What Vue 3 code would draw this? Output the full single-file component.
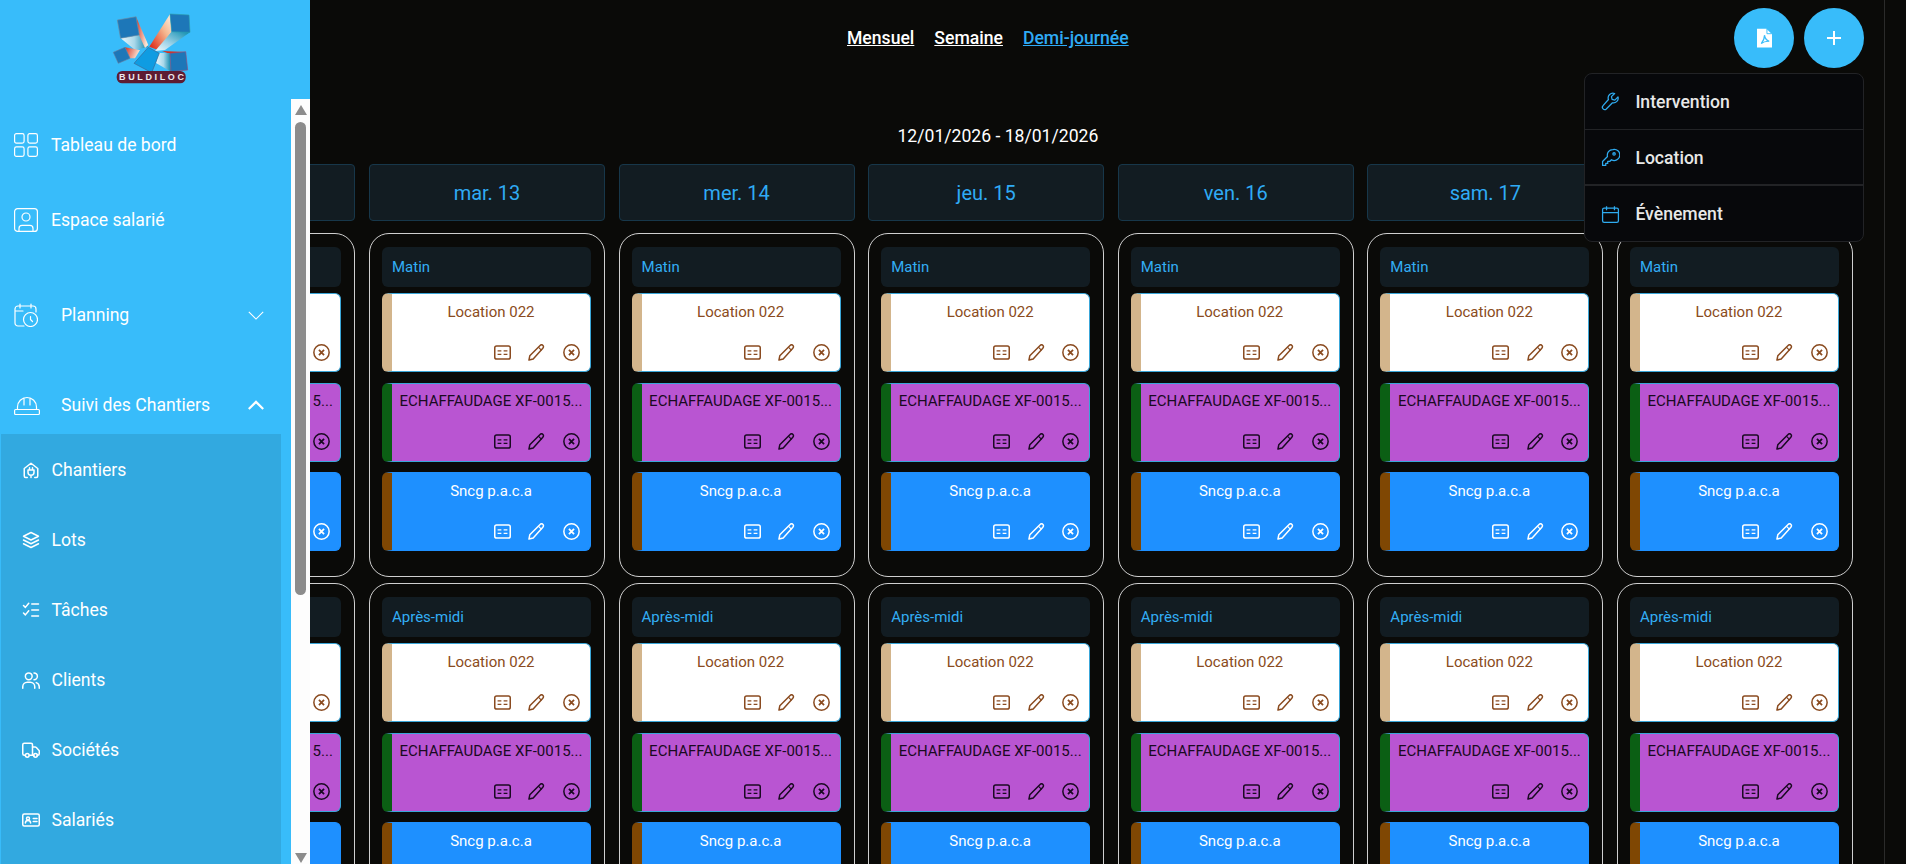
<template>
  <div class="page">
    <aside class="sidebar">
      <div class="logo">
        <svg width="80" height="72" viewBox="112 13 80 72">
          <defs>
            <linearGradient id="redWhite" x1="0" y1="0" x2="1" y2="0.300">
              <stop offset="0" stop-color="#d8301f" />
              <stop offset="1" stop-color="#f8e4d4" />
            </linearGradient>
            <linearGradient id="fireUp" x1="0" y1="1" x2="1" y2="0">
              <stop offset="0.100" stop-color="#e0331f" />
              <stop offset="0.600" stop-color="#f5b78f" />
              <stop offset="1" stop-color="#fdf3e8" />
            </linearGradient>
            <linearGradient id="iceTeal" x1="0" y1="0" x2="1" y2="0">
              <stop offset="0" stop-color="#eaf6fb" />
              <stop offset="0.500" stop-color="#a9d8ea" />
              <stop offset="1" stop-color="#0a86ab" />
            </linearGradient>
            <linearGradient id="tealIce" x1="1" y1="0" x2="0" y2="1">
              <stop offset="0" stop-color="#0b8cae" />
              <stop offset="0.600" stop-color="#9ed3e8" />
              <stop offset="1" stop-color="#f2fafd" />
            </linearGradient>
          </defs>
          <polygon points="120.7,38.3 139,35 148,47 135,50" fill="url(#iceTeal)" />
          <polygon points="136,16.7 148.3,45 145,48 139,35" fill="url(#redWhite)" />
          <rect x="118.8" y="18.3" width="19" height="18.5" fill="#1d77b8" stroke="#6f8aa0" stroke-width="0.6" transform="rotate(-10 128 27.5)" />
          <polygon points="170,14 171.7,31.7 158,50 149.3,46.7" fill="url(#fireUp)" />
          <polygon points="171.7,31.7 190,32.3 165,50 155,51" fill="url(#tealIce)" />
          <polygon points="170,14 189,15 190,32.3 171.7,31.7" fill="#1d77b8" stroke="#2b9aa8" stroke-width="0.6" />
          <polygon points="125,47.3 140,50 135,58.3 130,58.3" fill="url(#redWhite)" />
          <polygon points="113.3,52.3 125,47.3 130,58.3 118.3,63.3" fill="#1d77b8" stroke="#6a7a9a" stroke-width="0.6" />
          <polygon points="162,51 186,52 170,54" fill="#d8301f" />
          <polygon points="159,53 170,53 171,71.7 156,63" fill="url(#iceTeal)" />
          <polygon points="170,53.3 185.7,51.7 187.7,70 171,71.7" fill="#1d77b8" stroke="#9a4a78" stroke-width="0.6" />
          <polygon points="134,63.3 148.3,47.3 159.3,53.3 151.7,72.7" fill="#0f9ce2" stroke="#3f5f8a" stroke-width="0.6" />
          <rect x="116.7" y="71" width="69" height="12.3" rx="5.5" fill="#5e1c33" />
          <text x="119" y="80.3" class="logo-text" textLength="65" lengthAdjust="spacing">BULDILOC</text>
        </svg>
      </div>

      <div class="side-body">
        <nav class="menu">
          <div v-for="m in topMenu" :key="m.label" class="menu-item">
            <svg class="ic-lg" viewBox="0 0 24 24" v-html="m.icon"></svg>
            <span>{{ m.label }}</span>
          </div>

          <div class="menu-group planning">
            <svg class="ic-lg" viewBox="0 0 24 24" v-html="icons.planning"></svg>
            <span class="group-label">Planning</span>
            <svg class="chev" viewBox="0 0 20 12"><path d="M2 2l8 8 8-8" fill="none" stroke="#fff" stroke-width="1.2" /></svg>
          </div>

          <div class="menu-group chantiers">
            <svg class="ic-helmet" viewBox="0 0 26 24" v-html="icons.helmet"></svg>
            <span class="group-label group-label--tight">Suivi des Chantiers</span>
            <svg class="chev" viewBox="0 0 20 12"><path d="M2 10l8-8 8 8" fill="none" stroke="#fff" stroke-width="2.4" /></svg>
          </div>

          <div class="submenu">
            <div v-for="s in subMenu" :key="s.label" class="sub-item">
              <svg class="ic-sm" viewBox="0 0 24 24" v-html="s.icon"></svg>
              <span>{{ s.label }}</span>
            </div>
          </div>
        </nav>
        <div class="scrollbar">
          <span class="arrow-up"></span>
          <span class="thumb"></span>
          <span class="arrow-down"></span>
        </div>
      </div>
    </aside>

    <main class="main">
      <div class="topbar">
        <div class="views">
          <a class="view">Mensuel</a>
          <a class="view">Semaine</a>
          <a class="view view--active">Demi-journée</a>
        </div>
        <div class="actions">
          <button class="round">
            <svg width="15" height="20" viewBox="0 0 16 20">
              <path d="M0 0h10l6 6v14H0z" fill="#fff" />
              <path d="M10.6 0.4v5h5" fill="none" stroke="#38bcfa" stroke-width="1" />
              <path d="M8 7c.4 3 2 5.5 5 6.5-3-.2-6 .4-8.5 2.500 2-2.500 3.500-5.500 3.500-9z" fill="none" stroke="#38bcfa" stroke-width="1.3" />
            </svg>
          </button>
          <button class="round">
            <svg width="16" height="16" viewBox="0 0 16 16"><path d="M1 8h14M8 1v14" stroke="#fff" stroke-width="2" /></svg>
          </button>
          <div class="dropdown">
            <div v-for="d in dropItems" :key="d.label" class="drop-item">
              <svg class="drop-ic" viewBox="0 0 24 24" v-html="d.icon"></svg>
              <span>{{ d.label }}</span>
            </div>
          </div>
        </div>
      </div>

      <div class="range">12/01/2026 - 18/01/2026</div>

      <div class="week">
        <div v-for="day in days" :key="day" class="day">
          <div class="day-head">{{ day }}</div>
          <div v-for="slot in slots" :key="slot" class="slot">
            <div class="slot-title">{{ slot }}</div>
            <div v-for="ev in events" :key="ev.title" :class="['event', ev.cls]">
              <div class="event-title">{{ ev.title }}</div>
              <div class="event-icons">
                <svg class="ev-ic" viewBox="0 0 18 18"><rect x="0.8" y="2" width="16.4" height="14" rx="2" fill="none" stroke="currentColor" stroke-width="1.6" /><path d="M3.8 7.3h4M10.2 7.3h4M3.8 11h4M10.2 11h4" stroke="currentColor" stroke-width="1.5" /></svg>
                <svg class="ev-ic" viewBox="0 0 18 18"><path d="M1 17l.9-4.500L12.800 1.600c.9-.9 2.200-.9 3-.1s.8 2.100-.1 3L5.500 16z" fill="none" stroke="currentColor" stroke-width="1.6" stroke-linejoin="round" /><path d="M11 3.400l3.400 3.400" stroke="currentColor" stroke-width="1.2" /></svg>
                <svg class="ev-ic" viewBox="0 0 18 18"><circle cx="9" cy="9" r="8.1" fill="none" stroke="currentColor" stroke-width="1.6" /><path d="M6.300 6.300l5.400 5.400M11.700 6.300l-5.400 5.400" stroke="currentColor" stroke-width="1.9" /></svg>
              </div>
            </div>
          </div>
        </div>
      </div>
    </main>
    <div class="rail"></div>
  </div>
</template>

<script setup>
const line = 'fill="none" stroke="currentColor" stroke-width="1.2" stroke-linecap="round" stroke-linejoin="round"'
const lineSm = 'fill="none" stroke="currentColor" stroke-width="2" stroke-linecap="round" stroke-linejoin="round"'

const icons = {
  grid: `<g ${line}><rect x="0.6" y="0.6" width="9.5" height="9.5" rx="1.8"/><rect x="13.9" y="0.6" width="9.5" height="9.5" rx="1.8"/><rect x="0.6" y="13.9" width="9.5" height="9.5" rx="1.8"/><rect x="13.9" y="13.9" width="9.5" height="9.5" rx="1.8"/></g>`,
  user: `<g ${line}><rect x="0.6" y="0.6" width="22.8" height="22.8" rx="3"/><circle cx="12" cy="9" r="4"/><path d="M5 23.4v-3a3 3 0 0 1 3-3h8a3 3 0 0 1 3 3v3"/></g>`,
  planning: `<g ${line}><path d="M10 23H4a3 3 0 0 1-3-3V6a3 3 0 0 1 3-3h15a3 3 0 0 1 3 3v3M6 1v4M17 1v4M1 8h8"/><circle cx="16.5" cy="16.5" r="7"/><path d="M16.5 13.5v3l2 2"/></g>`,
  helmet: `<g ${line}><rect x="0.6" y="16.5" width="24.8" height="5" rx="1"/><path d="M3.5 16.500V14a9.500 9.500 0 0 1 19 0v2.500M10 5v7M16 5v7"/></g>`,
  house: `<g ${lineSm}><path d="M7 22H5a2 2 0 0 1-2-2V10l9-7 9 7v10a2 2 0 0 1-2 2h-2"/><path d="M8 12h8v3a4 4 0 0 1-8 0zM10 9v3M14 9v3M12 19v3"/></g>`,
  layers: `<g ${lineSm}><path d="M12 2l10 5-10 5L2 7z"/><path d="M2 12l10 5 10-5M2 17l10 5 10-5"/></g>`,
  tasks: `<g ${lineSm}><path d="M2 6l2.5 2.5L9 3M2 16l2.5 2.5L9 13M13 4h9M13 12h9M13 20h9"/></g>`,
  clients: `<g ${lineSm}><circle cx="9" cy="7" r="4.5"/><path d="M1 23v-2a6 6 0 0 1 6-6h4a6 6 0 0 1 6 6v2M16 2.5a4.500 4.500 0 0 1 0 9M19 15.500a6 6 0 0 1 4 5.500v2"/></g>`,
  truck: `<g ${lineSm}><path d="M4 19H3a2 2 0 0 1-2-2V5a2 2 0 0 1 2-2h9a2 2 0 0 1 2 2v14H10"/><path d="M14 8h3.5a2 2 0 0 1 1.6.8L23 13v4a2 2 0 0 1-2 2h-1M14 19h2"/><circle cx="7" cy="19" r="2.5"/><circle cx="18" cy="19" r="2.5"/></g>`,
  badge: `<g ${lineSm}><rect x="1" y="4" width="22" height="16" rx="2"/><circle cx="8" cy="10" r="2"/><path d="M4.5 16a3.500 3.500 0 0 1 7 0M15 10h5M15 14h5"/></g>`,
  wrench: `<path fill="none" stroke="currentColor" stroke-width="1.6" stroke-linejoin="round" d="M21.5 6.200l-4 4-3.500-.8-.8-3.500 4-4a6 6 0 0 0-7.800 7.600L2.600 17.300a2.900 2.900 0 0 0 4.100 4.100l7.800-7.800a6 6 0 0 0 7-7.400z"/>`,
  key: `<g fill="none" stroke="currentColor" stroke-width="1.6" stroke-linejoin="round"><path d="M15 2a7 7 0 0 0-6.800 8.800L2 17v5h4v-2.500h2.500V17h2.500l2.200-2.200A7 7 0 1 0 15 2z"/><circle cx="16.5" cy="7.5" r="1.5"/></g>`,
  calendar: `<g fill="none" stroke="currentColor" stroke-width="1.6" stroke-linejoin="round"><rect x="2" y="4" width="20" height="18" rx="2"/><path d="M2 9.5h20M7 1.500v5M17 1.500v5"/></g>`
}

const topMenu = [
  { label: 'Tableau de bord', icon: icons.grid },
  { label: 'Espace salarié', icon: icons.user }
]

const subMenu = [
  { label: 'Chantiers', icon: icons.house },
  { label: 'Lots', icon: icons.layers },
  { label: 'Tâches', icon: icons.tasks },
  { label: 'Clients', icon: icons.clients },
  { label: 'Sociétés', icon: icons.truck },
  { label: 'Salariés', icon: icons.badge }
]

const dropItems = [
  { label: 'Intervention', icon: icons.wrench },
  { label: 'Location', icon: icons.key },
  { label: 'Évènement', icon: icons.calendar }
]

const days = ['lun. 12', 'mar. 13', 'mer. 14', 'jeu. 15', 'ven. 16', 'sam. 17', 'dim. 18']
const slots = ['Matin', 'Après-midi']
const events = [
  { title: 'Location 022', cls: 'event--white' },
  { title: 'ECHAFFAUDAGE XF-0015...', cls: 'event--purple' },
  { title: 'Sncg p.a.c.a', cls: 'event--blue' }
]
</script>

<style>
html, body { margin: 0; background: #0a0a08; overflow: hidden; }
</style>

<style scoped>
.page { height: 864px; overflow: hidden; position: relative; display: flex; background: #0a0a08; font-family: Roboto, "Noto Sans", sans-serif; color: #fff; }

.sidebar { position: absolute; left: 0; top: 0; bottom: 0; width: 310px; background: #38bcfa; z-index: 5; display: flex; flex-direction: column; }
.logo { height: 99px; flex: none; box-sizing: border-box; padding: 13px 0 0 112px; }
.logo svg { display: block; }
.logo-text { font-family: "Liberation Sans", Arial, sans-serif; font-size: 9px; font-weight: 700; fill: #ece8ec; }
.side-body { flex: 1; display: flex; min-height: 0; }
.menu { flex: 1; overflow: hidden; }
.menu-item { height: 75px; display: flex; align-items: center; gap: 13px; padding-left: 14px; font-size: 17.6px; }
.menu-item:first-child { margin-top: 8px; }
.ic-lg { width: 24px; height: 24px; flex: none; color: #fff; }
.ic-helmet { width: 26px; height: 24px; flex: none; color: #fff; }
.menu-group { display: flex; align-items: center; padding-left: 14px; font-size: 17.6px; height: 40px; }
.planning { margin-top: 38px; }
.chantiers { margin-top: 50px; }
.group-label { margin-left: 23px; flex: 1; }
.group-label--tight { margin-left: 21px; }
.chev { width: 18px; height: 11px; margin-right: 26px; flex: none; }
.submenu { margin: 9px 0 0 1px; width: 280px; padding: 1px 0 30px; background: #32a9e0; }
.sub-item { height: 70px; display: flex; align-items: center; gap: 11.5px; padding-left: 21px; font-size: 17.6px; }
.ic-sm { width: 18px; height: 18px; flex: none; color: #fff; }

.scrollbar { width: 19px; flex: none; background: #fdfdfd; display: flex; flex-direction: column; align-items: center; }
.arrow-up { width: 0; height: 0; margin-top: 6px; border-left: 6.5px solid transparent; border-right: 6.5px solid transparent; border-bottom: 10px solid #8c8c8c; }
.thumb { width: 11px; height: 473px; margin-top: 7px; background: #8c8c8c; border-radius: 6px; }
.arrow-down { width: 0; height: 0; margin-top: auto; margin-bottom: 1px; border-left: 6.5px solid transparent; border-right: 6.5px solid transparent; border-top: 10px solid #8c8c8c; }

.main { width: 1884px; flex: none; padding-left: 119.4px; box-sizing: border-box; }
.rail { width: 1px; flex: none; background: #2b2b2a; }
.topbar { height: 115px; width: 1745px; box-sizing: border-box; display: flex; align-items: flex-start; }
.views { margin: 28px 0 0 727.6px; display: flex; gap: 20px; font-size: 17.6px; font-weight: 500; }
.view { text-decoration: underline; color: #fff; }
.view--active { color: #2fabf5; }
.actions { margin: 8px 0 0 auto; position: relative; display: flex; gap: 10px; }
.round { width: 60px; height: 60px; border: none; border-radius: 50%; background: #38bcfa; padding: 0; display: flex; align-items: center; justify-content: center; }
.dropdown { position: absolute; right: 0; top: 65px; width: 280px; height: 169px; box-sizing: border-box; background: #07080b; border: 1px solid #222326; border-radius: 8px; z-index: 3; display: flex; flex-direction: column; }
.drop-item { flex: 1; display: flex; align-items: center; gap: 15px; padding: 1px 0 0 16px; font-size: 17.6px; font-weight: 500; color: #e8e8e8; border-bottom: 1px solid #222326; }
.drop-item:nth-child(2) { border-bottom-width: 2px; }
.drop-item:last-child { border-bottom: none; }
.drop-ic { width: 19px; height: 19px; color: #2fabf0; flex: none; }

.range { text-align: center; font-size: 17.6px; height: 49px; line-height: 42px; width: 1757px; }

.week { display: flex; gap: 13.6px; }
.day { width: 236px; flex: none; }
.day-head { height: 57px; box-sizing: border-box; border: 1px solid #17374a; border-radius: 4px; background: #121c22; color: #2fabf5; font-size: 20px; display: flex; align-items: center; justify-content: center; margin-bottom: 12px; }
.slot { height: 344px; box-sizing: border-box; border: 1px solid #cfcfcf; border-radius: 20px; padding: 13px 13px 0 12px; margin-bottom: 6px; }
.slot-title { height: 40px; background: #121c22; border-radius: 6px; color: #33aef5; font-size: 15px; display: flex; align-items: center; padding-left: 10px; margin-bottom: 6px; }
.event { height: 79px; box-sizing: border-box; border-radius: 6px; border: 1px solid #3aa6d8; border-left: 10px solid; margin-bottom: 10.5px; padding-top: 9px; display: flex; flex-direction: column; }
.event-title { text-align: center; font-size: 15px; line-height: 18px; }
.event-icons { margin-top: auto; display: flex; justify-content: flex-end; gap: 17.5px; padding: 0 10px 10.5px 0; }
.ev-ic { width: 17px; height: 17px; }
.event--white { background: #fff; color: #8a4b20; border-left-color: #d3b58c; }
.event--purple { background: #b955d2; color: #1a0a22; border-left-color: #0b5f14; }
.event--purple .event-title { margin-top: -1px; }
.event--blue { background: #1e90ff; color: #fff; border-left-color: #7f4703; border-top-color: #1e90ff; border-right-color: #1e90ff; border-bottom-color: #1e90ff; }
</style>
